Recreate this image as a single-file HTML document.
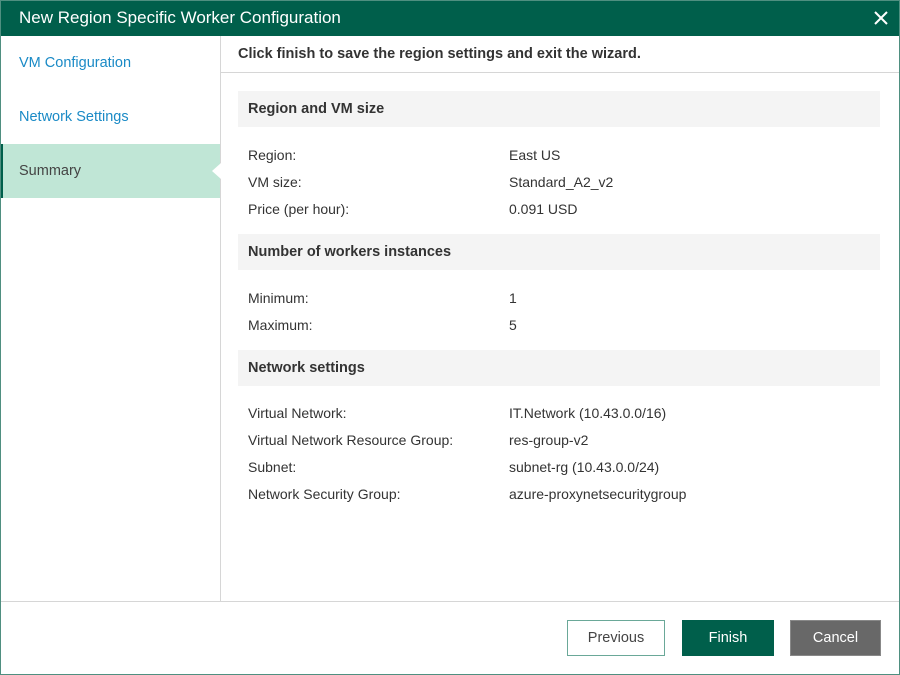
<!DOCTYPE html>
<html><head><meta charset="utf-8"><style>
*{margin:0;padding:0;box-sizing:border-box}
body{width:900px;height:675px;position:relative;background:#fff;font-family:"Liberation Sans",sans-serif;font-size:14px;color:#333;overflow:hidden}
.a{position:absolute;white-space:nowrap}
.frame{position:absolute;left:0;top:0;width:900px;height:675px;border:1px solid #4f8f80;pointer-events:none}
.title{left:0;top:0;width:900px;height:36px;background:#005f4b;color:#fff;font-size:17px;line-height:36px;padding-left:19px}
.nav{color:#1a8ac6;font-size:14.5px}
.sec{left:238px;width:642px;height:36px;background:#f4f4f4;font-weight:bold;line-height:36px;padding-left:10px;font-size:14.5px;color:#333}
.l{left:248px}.v{left:509px}
.btn{top:620px;height:36px;width:98px;line-height:34px;text-align:center;font-size:14.5px}
</style></head><body>
<div class="a title">New Region Specific Worker Configuration</div>
<div class="a" style="left:872px;top:9px;width:18px;height:18px">
<svg width="18" height="18"><path d="M3 3L15 15M15 3L3 15" stroke="#fff" stroke-width="2"/></svg></div>
<div class="a" style="left:220px;top:36px;width:1px;height:565px;background:#d6d6d6"></div>
<div class="a nav" style="left:19px;top:55px">VM Configuration</div>
<div class="a nav" style="left:19px;top:109px">Network Settings</div>
<div class="a" style="left:0;top:144px;width:220px;height:54px;background:#c0e6d6;border-left:3px solid #005f4b"></div>
<div class="a" style="left:19px;top:163px;color:#444;font-size:14.5px">Summary</div>
<div class="a" style="left:212px;top:163px;width:0;height:0;border-top:8px solid transparent;border-bottom:8px solid transparent;border-right:9px solid #fff"></div>
<div class="a" style="left:238px;top:46px;font-weight:bold;font-size:14.5px;color:#333">Click finish to save the region settings and exit the wizard.</div>
<div class="a" style="left:221px;top:72px;width:678px;height:1px;background:#d6d6d6"></div>
<div class="a sec" style="top:91px">Region and VM size</div>
<div class="a l" style="top:147px">Region:</div><div class="a v" style="top:147px">East US</div>
<div class="a l" style="top:174px">VM size:</div><div class="a v" style="top:174px">Standard_A2_v2</div>
<div class="a l" style="top:201px">Price (per hour):</div><div class="a v" style="top:201px">0.091 USD</div>
<div class="a sec" style="top:234px">Number of workers instances</div>
<div class="a l" style="top:290px">Minimum:</div><div class="a v" style="top:290px">1</div>
<div class="a l" style="top:317px">Maximum:</div><div class="a v" style="top:317px">5</div>
<div class="a sec" style="top:350px">Network settings</div>
<div class="a l" style="top:405px">Virtual Network:</div><div class="a v" style="top:405px">IT.Network (10.43.0.0/16)</div>
<div class="a l" style="top:432px">Virtual Network Resource Group:</div><div class="a v" style="top:432px">res-group-v2</div>
<div class="a l" style="top:459px">Subnet:</div><div class="a v" style="top:459px">subnet-rg (10.43.0.0/24)</div>
<div class="a l" style="top:486px">Network Security Group:</div><div class="a v" style="top:486px">azure-proxynetsecuritygroup</div>
<div class="a" style="left:0;top:601px;width:900px;height:1px;background:#d6d6d6"></div>
<div class="a btn" style="left:567px;border:1px solid #6aa898;color:#444;background:#fff">Previous</div>
<div class="a btn" style="left:682px;background:#005f4b;color:#fff;border:1px solid #005f4b;width:92px">Finish</div>
<div class="a btn" style="left:790px;background:#686868;color:#fff;border:1px solid #888;width:91px">Cancel</div>
<div class="frame"></div>
</body></html>
